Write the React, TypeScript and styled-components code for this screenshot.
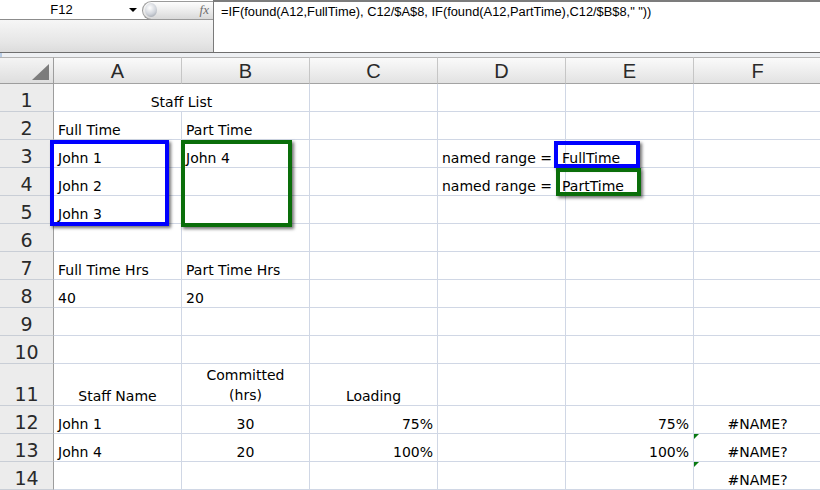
import React from 'react';
import styled, { createGlobalStyle } from 'styled-components';

const GlobalStyle = createGlobalStyle`
  html, body {
    margin: 0;
    padding: 0;
    background: #ffffff;
    overflow: hidden;
  }
  * {
    box-sizing: border-box;
  }
`;

const Page = styled.div`
  width: 820px;
  height: 490px;
  overflow: hidden;
  display: flex;
  flex-direction: column;
  font-family: "DejaVu Sans", Verdana, sans-serif;
  color: #000;
`;

const FormulaBar = styled.div`
  height: 54px;
  display: flex;
  border-bottom: 1px solid #6f6f6f;
`;

const NameArea = styled.div`
  width: 214px;
  display: flex;
  flex-direction: column;
  border-right: 1px solid #7a7a7a;
`;

const NameRow = styled.div`
  height: 20px;
  display: flex;
  align-items: center;
  background: #fff;
  border-bottom: 1px solid #8c8c8c;
`;

const NameBox = styled.div`
  width: 123px;
  text-align: center;
  font-family: "Liberation Sans", Arial, sans-serif;
  font-size: 13px;
`;

const DropArrow = styled.div`
  width: 0;
  height: 0;
  margin-left: 6px;
  border-left: 4px solid transparent;
  border-right: 4px solid transparent;
  border-top: 4px solid #000;
`;

const FxPill = styled.div`
  margin-left: 5px;
  flex: 1;
  height: 19px;
  margin-top: 1px;
  border: 1px solid #9a9a9a;
  border-right: none;
  border-radius: 10px 0 0 10px;
  background: linear-gradient(#fdfdfd, #e9e9e9 60%, #d9d9d9);
  display: flex;
  align-items: center;
  justify-content: space-between;
  padding: 0 4px 0 2px;
`;

const Knob = styled.div`
  width: 12px;
  height: 14px;
  border-radius: 50%;
  background: radial-gradient(circle at 40% 35%, #ffffff, #cfd3da 55%, #8e939b);
`;

const FxLabel = styled.span`
  font-family: "Liberation Serif", "Times New Roman", serif;
  font-style: italic;
  font-size: 13px;
  color: #6e6e6e;
`;

const NameFiller = styled.div`
  flex: 1;
  background: linear-gradient(#f6f6f6, #e6e6e6 70%, #dcdcdc);
`;

const FormulaText = styled.div`
  flex: 1;
  background: #fff;
  border-top: 2px solid #7c7c7c;
  padding: 2px 0 0 7px;
  font-family: "Liberation Sans", Arial, sans-serif;
  font-size: 12.85px;
  white-space: pre;
`;

const Strip = styled.div`
  height: 4px;
  background: #eef0f3;
  border-left: 2px solid #b9cde6;
`;

const Sheet = styled.div`
  position: relative;
  flex: 1;
`;

const Grid = styled.div`
  display: grid;
  grid-template-columns: 54px repeat(6, 128px);
  grid-template-rows: 27px repeat(10, 28px) 42px repeat(3, 28px);
`;

const CornerCell = styled.div`
  position: relative;
  background: linear-gradient(#f4f4f4, #dedede);
  border-right: 1px solid #9d9d9d;
  border-bottom: 1px solid #9d9d9d;
  border-top: 1px solid #b4b4b4;
  &::after {
    content: "";
    position: absolute;
    right: 4px;
    bottom: 3px;
    width: 0;
    height: 0;
    border-left: 17px solid transparent;
    border-bottom: 16px solid #7c7c7c;
  }
`;

const ColHeader = styled.div`
  background: linear-gradient(#fafafa, #ececec 60%, #e2e2e2);
  border-top: 1px solid #b4b4b4;
  border-right: 1px solid #c6c6c6;
  border-bottom: 1px solid #a3a3a3;
  display: flex;
  align-items: center;
  justify-content: center;
  font-family: "Liberation Sans", Arial, sans-serif;
  font-size: 20px;
  color: #2a2a2a;
  padding-top: 1px;
`;

const RowHeader = styled.div`
  background: #ececec;
  border-right: 1px solid #9d9d9d;
  border-bottom: 1px solid #c9ced6;
  display: flex;
  align-items: flex-end;
  justify-content: center;
  font-size: 19px;
  color: #2a2a2a;
`;

const Cell = styled.div<{ $align?: string; $span?: number }>`
  position: relative;
  grid-column: span ${p => p.$span || 1};
  border-right: 1px solid #d0d7e5;
  border-bottom: 1px solid #d0d7e5;
  display: flex;
  align-items: flex-end;
  justify-content: ${p => p.$align === 'right' ? 'flex-end' : p.$align === 'center' ? 'center' : 'flex-start'};
  padding: 0 4px 1px 4px;
  font-size: 14px;
  white-space: nowrap;
`;

const CellText = styled.span<{ $shift?: number }>`
  margin-left: ${p => -(p.$shift || 0)}px;
`;

const WrapText = styled.span`
  text-align: center;
  line-height: 20px;
  white-space: pre;
  margin-bottom: -1px;
`;

const Marker = styled.div`
  position: absolute;
  left: 0;
  top: 0;
  width: 0;
  height: 0;
  border-top: 5px solid #0a7a12;
  border-right: 5px solid transparent;
`;

const RangeBox = styled.div<{ $color: string }>`
  position: absolute;
  border: 4px solid ${p => p.$color};
  box-shadow: 2px 2px 3px rgba(0, 0, 0, 0.55);
  pointer-events: none;
`;

type CellDef = { t?: string; a?: string; span?: number; wrap?: boolean; mark?: boolean; shift?: number };

const rows: CellDef[][] = [
  [{ t: 'Staff List', a: 'center', span: 2 }, {}, {}, {}, {}],
  [{ t: 'Full Time' }, { t: 'Part Time' }, {}, {}, {}, {}],
  [{ t: 'John 1' }, { t: 'John 4' }, {}, { t: 'named range =' }, { t: 'FullTime', shift: 8 }, {}],
  [{ t: 'John 2' }, {}, {}, { t: 'named range =' }, { t: 'PartTime', shift: 8 }, {}],
  [{ t: 'John 3' }, {}, {}, {}, {}, {}],
  [{}, {}, {}, {}, {}, {}],
  [{ t: 'Full Time Hrs' }, { t: 'Part Time Hrs' }, {}, {}, {}, {}],
  [{ t: '40' }, { t: '20' }, {}, {}, {}, {}],
  [{}, {}, {}, {}, {}, {}],
  [{}, {}, {}, {}, {}, {}],
  [{ t: 'Staff Name', a: 'center' }, { t: 'Committed\n(hrs)', a: 'center', wrap: true }, { t: 'Loading', a: 'center' }, {}, {}, {}],
  [{ t: 'John 1' }, { t: '30', a: 'center' }, { t: '75%', a: 'right' }, {}, { t: '75%', a: 'right' }, { t: '#NAME?', a: 'center' }],
  [{ t: 'John 4' }, { t: '20', a: 'center' }, { t: '100%', a: 'right' }, {}, { t: '100%', a: 'right' }, { t: '#NAME?', a: 'center', mark: true }],
  [{}, {}, {}, {}, {}, { t: '#NAME?', a: 'center', mark: true }],
];

const columns = ['A', 'B', 'C', 'D', 'E', 'F'];

const formula = '=IF(found(A12,FullTime), C12/$A$8, IF(found(A12,PartTime),C12/$B$8," "))';

export default function App() {
  return (
    <Page>
      <GlobalStyle />
      <FormulaBar>
        <NameArea>
          <NameRow>
            <NameBox>F12</NameBox>
            <DropArrow />
            <FxPill>
              <Knob />
              <FxLabel>fx</FxLabel>
            </FxPill>
          </NameRow>
          <NameFiller />
        </NameArea>
        <FormulaText>{formula}</FormulaText>
      </FormulaBar>
      <Strip />
      <Sheet>
        <Grid>
          <CornerCell />
          {columns.map(c => (
            <ColHeader key={c}>{c}</ColHeader>
          ))}
          {rows.map((row, i) => (
            <React.Fragment key={i}>
              <RowHeader>{i + 1}</RowHeader>
              {row.map((cell, j) => (
                <Cell key={j} $align={cell.a} $span={cell.span}>
                  {cell.mark && <Marker />}
                  {cell.wrap ? (
                    <WrapText>{cell.t}</WrapText>
                  ) : (
                    <CellText $shift={cell.shift}>{cell.t}</CellText>
                  )}
                </Cell>
              ))}
            </React.Fragment>
          ))}
        </Grid>
        <RangeBox $color="#0000ff" style={{ left: 50, top: 83, width: 119, height: 86 }} />
        <RangeBox $color="#0a6e0a" style={{ left: 181, top: 83, width: 111, height: 87 }} />
        <RangeBox $color="#0000ff" style={{ left: 554, top: 84, width: 86, height: 27 }} />
        <RangeBox $color="#0a6e0a" style={{ left: 556, top: 111, width: 85, height: 28 }} />
      </Sheet>
    </Page>
  );
}
